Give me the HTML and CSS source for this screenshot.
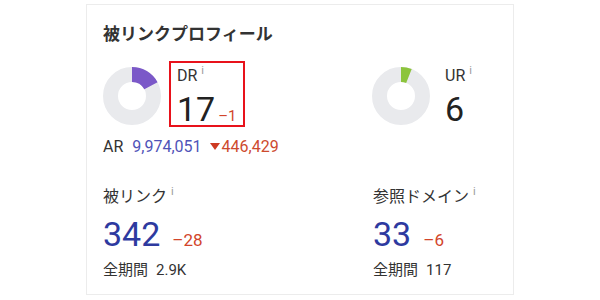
FILE: index.html
```html
<!DOCTYPE html>
<html lang="ja">
<head>
  <meta charset="UTF-8">
  <title>被リンクプロフィール</title>
  <link rel="stylesheet" href="styles.css">
</head>
<body>
  <div class="card">
    <h2 class="title">被リンクプロフィール</h2>

    <div class="top">
      <div class="rating">
        <svg class="donut" viewBox="0 0 58 58">
          <circle cx="29" cy="29" r="21.5" class="ring"></circle>
          <circle cx="29" cy="29" r="21.5" class="part purple" stroke-dasharray="22.97 135.09"></circle>
        </svg>
        <div class="metric boxed">
          <div class="label">DR<sup>i</sup></div>
          <div class="big">17<span class="delta near">–1</span></div>
        </div>
      </div>

      <div class="rating">
        <svg class="donut" viewBox="0 0 58 58">
          <circle cx="29" cy="29" r="21.5" class="ring"></circle>
          <circle cx="29" cy="29" r="21.5" class="part green" stroke-dasharray="8.1 135.09"></circle>
        </svg>
        <div class="metric ur">
          <div class="label">UR<sup>i</sup></div>
          <div class="big">6</div>
        </div>
      </div>
    </div>

    <div class="ar">AR <span class="link">9,974,051</span><span class="down"><span class="tri"></span>446,429</span></div>

    <div class="bottom">
      <div class="stat">
        <div class="label">被リンク<sup>i</sup></div>
        <div class="big blue">342<span class="delta">–28</span></div>
        <div class="total">全期間<span class="value">2.9K</span></div>
      </div>
      <div class="stat">
        <div class="label">参照ドメイン<sup>i</sup></div>
        <div class="big blue">33<span class="delta">–6</span></div>
        <div class="total">全期間<span class="value">117</span></div>
      </div>
    </div>
  </div>
</body>
</html>
```

FILE: styles.css
```css
body {
  margin: 0;
  background: #ffffff;
  font-family: Roboto, "Noto Sans CJK JP", sans-serif;
  color: #333;
}

.card {
  box-sizing: border-box;
  width: 428px;
  height: 291px;
  margin: 4px 0 0 86px;
  padding: 17px 16px 0 16px;
  border: 1px solid #ececec;
}

.title {
  margin: 0;
  font-size: 17px;
  line-height: 24px;
  font-weight: 700;
  color: #333;
}

.top {
  display: grid;
  grid-template-columns: 269px 1fr;
  margin-top: 15px;
}

.rating {
  display: flex;
  align-items: flex-start;
}

.donut {
  flex-shrink: 0;
  width: 58px;
  height: 58px;
  margin-top: 6px;
  transform: rotate(-90deg);
}

.ring,
.part {
  fill: none;
  stroke-width: 15;
}

.ring { stroke: #e9eaed; }
.purple { stroke: #7b58c8; }
.green { stroke: #8cc43c; }

.metric {
  margin-left: 8px;
  padding: 0 6px 0 6px;
  border: 2px solid transparent;
}

.metric.boxed {
  border-color: #e8121b;
}

.metric.ur {
  margin-left: 7px;
}

.metric .label {
  padding-top: 3px;
}

.label {
  font-size: 16px;
  line-height: 20px;
}

sup {
  font-size: 11px;
  color: #999;
  margin-left: 4px;
  vertical-align: 7px;
  line-height: 0;
}

.big {
  font-size: 34px;
  line-height: 18px;
  margin-top: 14px;
  color: #222;
}

.delta {
  font-size: 17px;
  color: #d2452b;
  margin-left: 12px;
}

.delta.near {
  font-size: 15px;
  margin-left: 3px;
}

.ar {
  font-size: 16px;
  line-height: 20px;
  margin-top: 10px;
}

.link {
  color: #4f53b8;
  margin-left: 5px;
}

.down {
  color: #cd4a2e;
}

.tri {
  display: inline-block;
  width: 0;
  height: 0;
  margin: 0 2px 2px 8px;
  border-left: 5px solid transparent;
  border-right: 5px solid transparent;
  border-top: 7px solid #cd3a22;
}

.bottom {
  display: grid;
  grid-template-columns: 270px 1fr;
  margin-top: 30px;
}

.big.blue {
  color: #2e3a9f;
  line-height: 40px;
  margin-top: 7px;
}

.total {
  font-size: 15px;
  line-height: 20px;
  margin-top: 0;
}

.value {
  margin-left: 8px;
}
```
